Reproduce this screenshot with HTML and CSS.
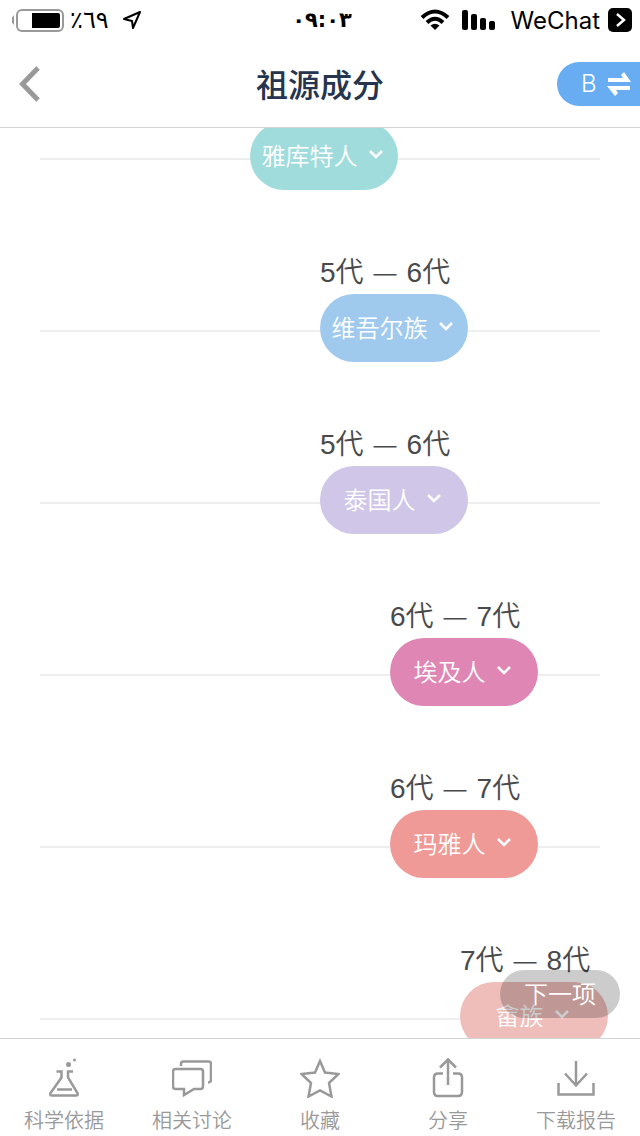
FILE: index.html
```html
<!DOCTYPE html>
<html lang="zh-CN">
<head>
<meta charset="utf-8">
<meta name="viewport" content="width=device-width, initial-scale=1">
<title>祖源成分</title>
<link rel="stylesheet" href="styles.css">
</head>
<body>
<div class="status">
<div class="status-side">
<svg class="battery" width="52" height="24" viewBox="0 0 52 24"><path d="M2 7Q-3 12 2 17Z" fill="#999"/><rect x="4" y="1" width="48" height="23" rx="6" fill="#999"/><rect x="6" y="3" width="44" height="19" rx="4" fill="#fff"/><path d="M20 5h26q2 0 2 2v11q0 2-2 2H20z"/></svg>
<span class="digits">٪٦٩</span>
<svg class="arrow" width="20" height="20" viewBox="0 0 20 20" fill="none" stroke="#000" stroke-width="2" stroke-linejoin="round"><path d="M18 2 2 9l8 2 1 7z"/></svg>
</div>
<span class="digits clock">٠٩:٠٣</span>
<div class="status-side status-end">
<svg width="30" height="22" viewBox="0 0 30 22" fill="none" stroke="#000" stroke-width="4"><path d="M2 8.500Q15-3.500 28 8.500M7 13.500Q15 6 23 13.500"/><path d="M15 21l-4.500-4.500q4.500-3.500 9 0z" fill="#000" stroke="none"/></svg>
<svg class="signal" width="34" height="20" viewBox="0 0 34 20"><rect width="6" height="20" rx="2"/><rect x="9" y="4" width="6" height="16" rx="2"/><rect x="18" y="8" width="6" height="12" rx="2"/><rect x="27" y="11" width="6" height="9" rx="2"/></svg>
<span class="carrier">WeChat</span>
<svg width="24" height="24" viewBox="0 0 24 24"><rect width="24" height="24" rx="5"/><path d="M9 6l7 6-7 6" fill="none" stroke="#fff" stroke-width="2.500"/></svg>
</div>
</div>

<header class="nav">
<button class="back" aria-label="返回"><svg width="22" height="36" viewBox="0 0 22 36" fill="none" stroke="#999" stroke-width="5"><path d="M19 2 3.500 18 19 34"/></svg></button>
<h1>祖源成分</h1>
<button class="switch">B <svg width="24" height="24" viewBox="0 0 24 24" fill="#fff"><path d="M1 6h15l-2-3 3-3 7 10H1zM23 14v4H9l2 3-3 3-8-10z"/></svg></button>
</header>

<main>
<ul class="timeline">
<li>
<div class="track"><button class="pill teal" style="margin-left: 37.5%">雅库特人<svg width="14" height="10" viewBox="0 0 14 10"><path d="M1 2l6 6 6-6"/></svg></button></div>
</li>
<li>
<p class="gen" style="margin-left: 50%">5代<span class="dash">—</span>6代</p>
<div class="track"><button class="pill blue" style="margin-left: 50%">维吾尔族<svg width="14" height="10" viewBox="0 0 14 10"><path d="M1 2l6 6 6-6"/></svg></button></div>
</li>
<li>
<p class="gen" style="margin-left: 50%">5代<span class="dash">—</span>6代</p>
<div class="track"><button class="pill purple" style="margin-left: 50%">泰国人<svg width="14" height="10" viewBox="0 0 14 10"><path d="M1 2l6 6 6-6"/></svg></button></div>
</li>
<li>
<p class="gen" style="margin-left: 62.5%">6代<span class="dash">—</span>7代</p>
<div class="track"><button class="pill pink" style="margin-left: 62.5%">埃及人<svg width="14" height="10" viewBox="0 0 14 10"><path d="M1 2l6 6 6-6"/></svg></button></div>
</li>
<li>
<p class="gen" style="margin-left: 62.5%">6代<span class="dash">—</span>7代</p>
<div class="track"><button class="pill red" style="margin-left: 62.5%">玛雅人<svg width="14" height="10" viewBox="0 0 14 10"><path d="M1 2l6 6 6-6"/></svg></button></div>
</li>
<li>
<p class="gen" style="margin-left: 75%">7代<span class="dash">—</span>8代</p>
<div class="track"><button class="pill rose" style="margin-left: 75%">畲族<svg width="14" height="10" viewBox="0 0 14 10"><path d="M1 2l6 6 6-6"/></svg></button></div>
</li>
</ul>
<button class="next">下一项</button>
</main>

<nav class="tabs">
<a href="#science"><svg width="40" height="40" viewBox="0 0 40 40"><path d="M12.500 13.500h5v6L6.500 35q-1 2.500 1.500 2.500h24q2.500 0 1.500-2.500L24 19.500v-6h5M13 31.500h15"/><circle cx="24.500" cy="6.500" r="2.500" class="dot"/><circle cx="30.500" cy="2" r="1.500" class="dot"/></svg>科学依据</a>
<a href="#discuss"><svg width="40" height="40" viewBox="0 0 40 40"><path d="M9 8V6q0-2.500 2.500-2.500h25q2.500 0 2.500 2.500v16q0 2.500-3 2.500"/><path d="M3.500 11h25q2.500 0 2.500 2.500v15q0 2.500-2.500 2.500H22l-10 6v-6H3.500Q1 31 1 28.500v-15Q1 11 3.500 11z"/></svg>相关讨论</a>
<a href="#favorite"><svg width="40" height="40" viewBox="0 0 40 40"><path d="M20 3l5 11.500 13.500 1.500-9.500 9 2.500 13.500L20 32.500 8.500 38.500 11 25l-9.500-9L15 14.500z"/></svg>收藏</a>
<a href="#share"><svg width="40" height="40" viewBox="0 0 40 40"><path d="M15 15.500h-5q-4 0-4 4V34q0 4 4 4h20q4 0 4-4V19.500q0-4-4-4h-5M20 27V2M12 9.500l8-8 8 8"/></svg>分享</a>
<a href="#download"><svg width="40" height="40" viewBox="0 0 40 40"><path d="M2.500 25v11.500h35V25M20 3v25M9 15.500l11 12 11-12"/></svg>下载报告</a>
</nav>
</body>
</html>
```
FILE: styles.css
```css
* {
box-sizing: border-box;
}
body {
margin: 0;
height: 100vh;
display: flex;
flex-direction: column;
background: #fff;
font-family: "Liberation Sans", "Noto Sans CJK SC", sans-serif;
font-weight: 350;
}
button {
border: 0;
padding: 0;
font: inherit;
color: #fff;
cursor: pointer;
}
svg {
display: block;
flex: none;
}
.status {
height: 40px;
padding: 0 8px 0 12px;
display: grid;
grid-template-columns: 1fr auto 1fr;
align-items: center;
color: #000;
}
.status-side {
display: flex;
align-items: center;
}
.status-end {
justify-content: flex-end;
}
.digits {
font: 24px "DejaVu Sans", sans-serif;
direction: ltr;
unicode-bidi: bidi-override;
}
.battery {
margin-right: 6px;
}
.arrow {
margin-left: 13px;
}
.clock {
font-size: 21px;
font-weight: bold;
}
.signal {
margin: 0 15px 0 12px;
}
.carrier {
margin-right: 8px;
font: 24px Inter, sans-serif;
}
.nav {
height: 88px;
display: grid;
grid-template-columns: 1fr auto 1fr;
align-items: center;
border-bottom: 1px solid #d4d4d4;
}
.back {
justify-self: start;
margin-left: 19px;
background: none;
}
.nav h1 {
margin: 0;
padding-bottom: 2px;
font-size: 32px;
font-weight: 500;
color: #26344d;
}
.switch {
justify-self: end;
width: 83px;
height: 44px;
padding-left: 24px;
display: flex;
align-items: center;
gap: 10px;
border-radius: 22px 0 0 22px;
background: #68adf2;
font: 300 24px Inter, sans-serif;
}
main {
flex: 1;
min-height: 0;
position: relative;
overflow: hidden;
}
/* list is scrolled a little past the first pill */
.timeline {
list-style: none;
margin: -6px 40px 0;
padding: 0;
}
.timeline li {
margin-bottom: 60px;
}
.gen {
margin: 0;
height: 44px;
line-height: 46px;
font-size: 28px;
color: #4a4a4a;
white-space: nowrap;
}
.dash {
margin: 0 10px;
font-family: Inter, sans-serif;
font-size: 23px;
}
.track {
background: linear-gradient(#eee, #eee) 0 36px / 100% 2px no-repeat;
}
.pill {
width: 148px;
height: 68px;
padding: 0 4px 4px 0;
display: flex;
align-items: center;
justify-content: center;
gap: 11px;
border-radius: 34px;
font-size: 24px;
}
.pill svg {
fill: none;
stroke: #fff;
stroke-width: 2.5;
}
.teal { background: #a1dcdd; }
.blue { background: #9fcaee; }
.purple { background: #cfc6e8; }
.pink { background: #df86b5; }
.red { background: #f09a97; }
.rose { background: #efbdba; }
.next {
position: absolute;
right: 20px;
bottom: 20px;
width: 120px;
height: 48px;
padding-bottom: 4px;
border-radius: 24px;
background: rgba(0, 0, 0, .2);
font-size: 24px;
}
.tabs {
height: 98px;
padding-top: 19px;
display: flex;
border-top: 1px solid #d4d4d4;
}
.tabs a {
flex: 1;
display: flex;
flex-direction: column;
align-items: center;
gap: 9px;
color: #999;
font-size: 20px;
line-height: 28px;
text-decoration: none;
}
.tabs svg {
fill: none;
stroke: #999;
stroke-width: 2.5;
}
.tabs .dot {
fill: #999;
stroke: none;
}
```
